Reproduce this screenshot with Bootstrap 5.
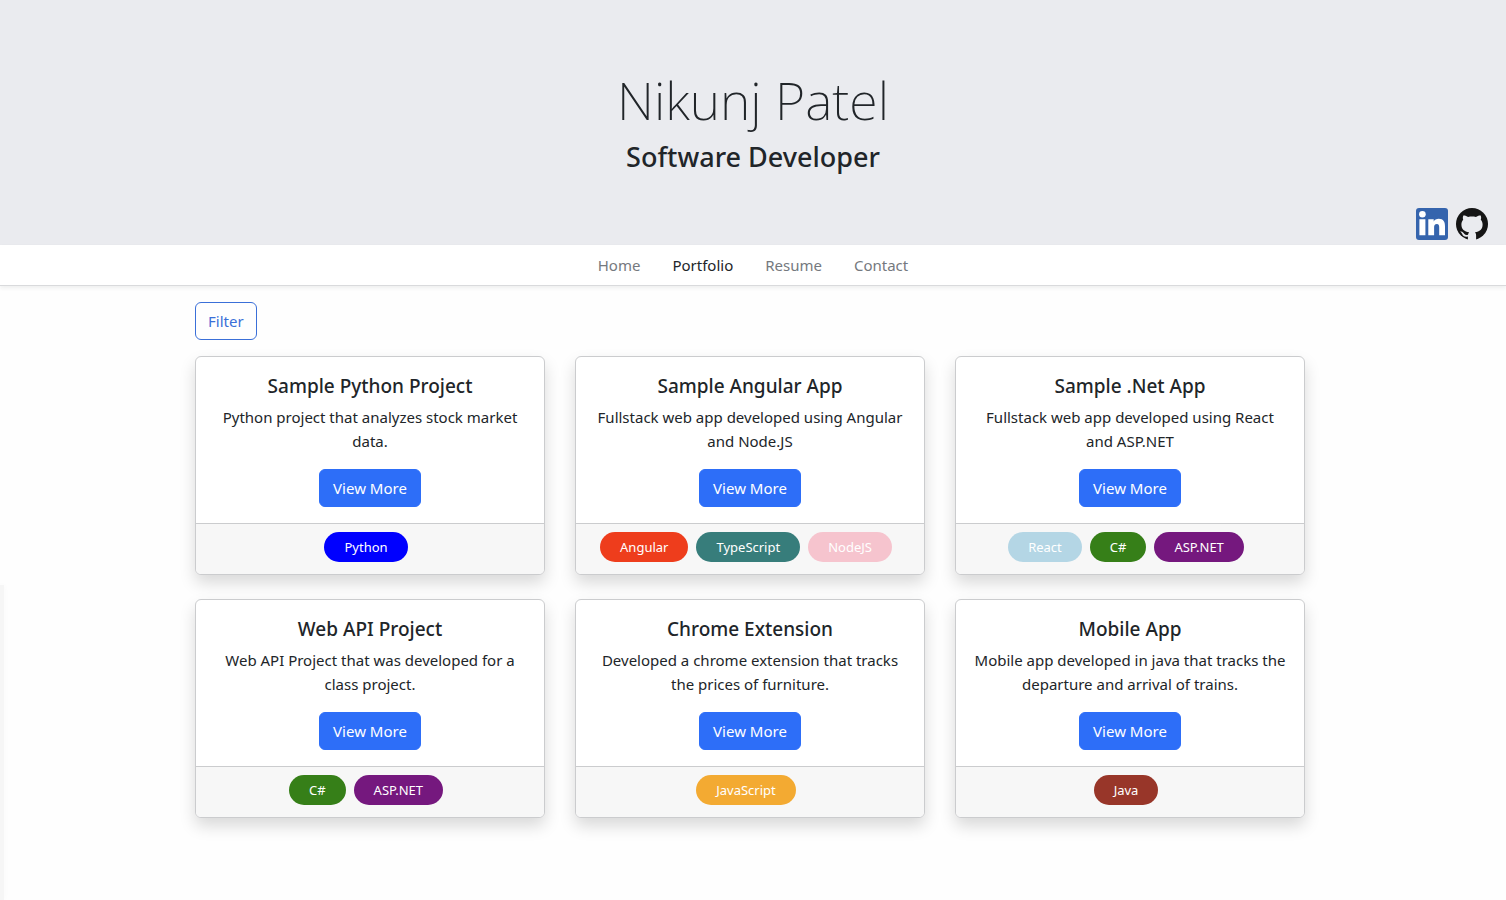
<!DOCTYPE html>
<html lang="en">
<head>
<meta charset="utf-8">
<meta name="viewport" content="width=device-width, initial-scale=1">
<title>Nikunj Patel</title>
<link href="https://cdn.jsdelivr.net/npm/bootstrap@5.3.0/dist/css/bootstrap.min.css" rel="stylesheet">
<script src="https://cdn.jsdelivr.net/npm/bootstrap@5.3.0/dist/js/bootstrap.bundle.min.js" defer></script>
<style>
  body { font-family: "Segoe UI", "Noto Sans", "Open Sans", sans-serif; font-size: 15px; line-height: 24px; background: #fefefe; overflow-x: hidden; }
  .hero { background: #eaebef; padding-top: 66px; }
  .hero h1 { font-size: 52px; font-weight: 250; line-height: 67px; margin-bottom: 7px; }
  .hero h2 { font-size: 27px; font-weight: 500; line-height: 34px; margin-bottom: 34px; }
  .social { padding: 0 18px 5px; }
  .social svg { display: block; }
  .site-nav { background: #fff; border-bottom: 1px solid #d9dadc; }
  .site-nav .nav-link { color: #75797e; padding: 8px 16px; }
  .site-nav .nav-link.active { color: #212529; }
  .portfolio { max-width: 1140px; padding: 16px 18px 24px 12px; }
  .btn { --bs-btn-font-size: 15px; --bs-btn-line-height: 24px; }
  .btn-primary { --bs-btn-bg: #2d6ef8; --bs-btn-border-color: #2d6ef8; --bs-btn-padding-x: 13px; }
  .btn-outline-primary { --bs-btn-color: #3a6fd8; --bs-btn-border-color: #3a6fd8; }
  .projects { column-gap: 30px; row-gap: 24px; display: grid; grid-template-columns: repeat(auto-fit, minmax(300px, 1fr)); }
  .project { --bs-card-border-color: #cbccce; --bs-card-cap-bg: #f7f7f7; box-shadow: 0 8px 16px rgba(0,0,0,.15); }
  .project .card-title { font-size: 19px; font-weight: 500; line-height: 26px; margin-bottom: 6px; }
  .project .card-footer { padding: 8px 16px; }
  .tag-pill { font-size: 13px; line-height: 20px; padding: 5px 20px; margin: 0 8px 4px 0; border-radius: 15px; color: #fff; }
  .t-python { background: #00f; } .t-angular { background: #ee3d1c; } .t-ts { background: #377d7b; }
  .t-node { background: #f6c4ce; } .t-react { background: #b4d6e5; } .t-cs { background: #367f18; }
  .t-asp { background: #75187e; } .t-js { background: #f3aa32; } .t-java { background: #983629; }
  .edge-shade { position: fixed; left: 0; top: 65%; bottom: 0; width: 4px; background: #f6f6f6; box-shadow: 0 0 6px #f8f8f8; }
</style>
</head>
<body>
<header class="hero text-center">
  <h1>Nikunj Patel</h1>
  <h2>Software Developer</h2>
  <div class="social d-flex justify-content-end gap-2">
    <a href="#" aria-label="LinkedIn"><svg width="32" height="32" viewBox="0 0 32 32"><rect width="32" height="32" rx="3" fill="#3564ad"/><g fill="#fff"><circle cx="6.4" cy="6.2" r="3.3"/><path d="M3.400 11.300h6V27.200h-6zM12.300 11.300h5.400v2.200c.9-1.600 2.700-2.700 5-2.700 4.900 0 6.300 3.100 6.300 7.700v8.700h-5.800v-7.600c0-2-.4-3.500-2.300-3.500-2.200 0-2.800 1.500-2.800 3.500v7.600h-5.800z"/></g></svg></a>
    <a href="#" aria-label="GitHub"><svg width="32" height="32" viewBox="0 0 32 32"><circle cx="16" cy="16" r="16" fill="#151515"/><path fill="#eaebef" d="M7.300 7.500c1.700-.2 3.300.5 4.800 1.500 2.600-.6 5.200-.6 7.800 0 1.500-1 3.100-1.700 4.800-1.500.6 1.600.6 3 .1 4.300 1.200 1.300 1.800 2.900 1.800 4.700 0 5-3 7.200-7.600 7.700.8.800 1.100 1.900 1.100 3.200V32h-8.200v-3.500c-3.200.7-4.800-.4-5.700-2.600-.6-1.200-1.300-1.900-2.100-2.400 2.500-.5 3.500 1.300 4.300 2.400.9 1.200 2.200 1.300 3.600.8.200-1 .5-1.800 1.100-2.500-4.600-.5-7.700-2.700-7.700-7.700 0-1.800.6-3.400 1.800-4.700-.5-1.300-.5-2.700.1-4.300z"/></svg></a>
  </div>
</header>
<nav class="site-nav shadow-sm">
  <ul class="nav justify-content-center">
    <li class="nav-item"><a class="nav-link" href="#">Home</a></li>
    <li class="nav-item"><a class="nav-link active" aria-current="page" href="#">Portfolio</a></li>
    <li class="nav-item"><a class="nav-link" href="#">Resume</a></li>
    <li class="nav-item"><a class="nav-link" href="#">Contact</a></li>
  </ul>
</nav>
<main class="portfolio mx-auto">
  <button type="button" class="btn btn-outline-primary mb-3">Filter</button>
  <div class="projects">
    <article class="card project text-center">
      <div class="card-body"><h5 class="card-title">Sample Python Project</h5><p class="card-text">Python project that analyzes stock market data.</p><button type="button" class="btn btn-primary">View More</button></div>
      <div class="card-footer d-flex flex-wrap justify-content-center"><span class="tag-pill t-python">Python</span></div>
    </article>
    <article class="card project text-center">
      <div class="card-body"><h5 class="card-title">Sample Angular App</h5><p class="card-text">Fullstack web app developed using Angular and Node.JS</p><button type="button" class="btn btn-primary">View More</button></div>
      <div class="card-footer d-flex flex-wrap justify-content-center"><span class="tag-pill t-angular">Angular</span><span class="tag-pill t-ts">TypeScript</span><span class="tag-pill t-node">NodeJS</span></div>
    </article>
    <article class="card project text-center">
      <div class="card-body"><h5 class="card-title">Sample .Net App</h5><p class="card-text">Fullstack web app developed using React and ASP.NET</p><button type="button" class="btn btn-primary">View More</button></div>
      <div class="card-footer d-flex flex-wrap justify-content-center"><span class="tag-pill t-react">React</span><span class="tag-pill t-cs">C#</span><span class="tag-pill t-asp">ASP.NET</span></div>
    </article>
    <article class="card project text-center">
      <div class="card-body"><h5 class="card-title">Web API Project</h5><p class="card-text">Web API Project that was developed for a class project.</p><button type="button" class="btn btn-primary">View More</button></div>
      <div class="card-footer d-flex flex-wrap justify-content-center"><span class="tag-pill t-cs">C#</span><span class="tag-pill t-asp">ASP.NET</span></div>
    </article>
    <article class="card project text-center">
      <div class="card-body"><h5 class="card-title">Chrome Extension</h5><p class="card-text">Developed a chrome extension that tracks the prices of furniture.</p><button type="button" class="btn btn-primary">View More</button></div>
      <div class="card-footer d-flex flex-wrap justify-content-center"><span class="tag-pill t-js">JavaScript</span></div>
    </article>
    <article class="card project text-center">
      <div class="card-body"><h5 class="card-title">Mobile App</h5><p class="card-text">Mobile app developed in java that tracks the departure and arrival of trains.</p><button type="button" class="btn btn-primary">View More</button></div>
      <div class="card-footer d-flex flex-wrap justify-content-center"><span class="tag-pill t-java">Java</span></div>
    </article>
  </div>
</main>
<div class="edge-shade" aria-hidden="true"></div>
</body>
</html>
